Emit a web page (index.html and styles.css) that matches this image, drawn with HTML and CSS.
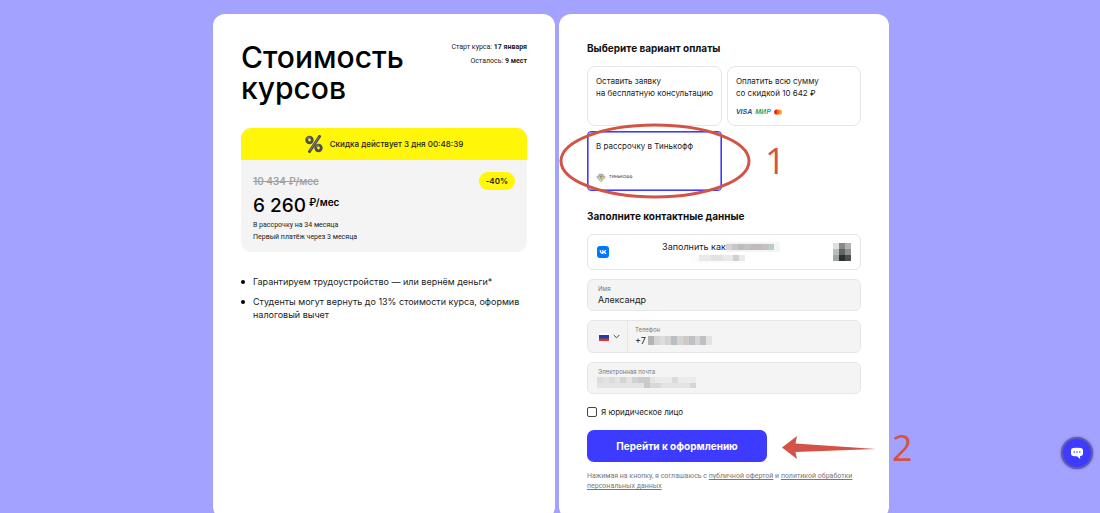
FILE: index.html
```html
<!DOCTYPE html>
<html lang="ru">
<head>
  <meta charset="UTF-8" />
  <meta name="viewport" content="width=device-width, initial-scale=1.0"/>
  <title>Стоимость курсов</title>
  <link rel="stylesheet" href="styles.css">
</head>
<body>
  <main class="page">
    <section class="card price-card">
      <header class="price-head">
        <h1>Стоимость курсов</h1>
        <div class="start-info">
          <p>Старт курса: <strong>17 января</strong></p>
          <p>Осталось: <strong>9 мест</strong></p>
        </div>
      </header>

      <div class="offer">
        <div class="offer-timer">
          <svg class="percent" viewBox="0 0 18 18" aria-hidden="true">
            <path d="M14.5 1.5 4.5 16.5" stroke="#4a4a4c" stroke-width="3" stroke-linecap="round"/>
            <path d="M14.2 1.8 4.6 16" stroke="#85858a" stroke-width="1"/>
            <circle cx="4.5" cy="5" r="2.8" fill="none" stroke="#4f4f4c" stroke-width="2.800"/>
            <circle cx="13.5" cy="13" r="2.8" fill="none" stroke="#4f4f4c" stroke-width="2.800"/>
            <path d="M2 4a3 3 0 0 1 3-2M11 12a3 3 0 0 1 3-2" fill="none" stroke="#8b8b90" stroke-width="1"/>
          </svg>
          <span>Скидка действует 3 дня 00:48:39</span>
        </div>
        <div class="offer-body">
          <div class="old-row">
            <s class="old-price">10 434 ₽/мес</s>
            <span class="discount">-40%</span>
          </div>
          <p class="new-price">6 260<span class="unit">₽/мес</span></p>
          <p class="note">В рассрочку на 34 месяца</p>
          <p class="note">Первый платёж через 3 месяца</p>
        </div>
      </div>

      <ul class="benefits">
        <li>Гарантируем трудоустройство — или вернём деньги*</li>
        <li>Студенты могут вернуть до 13% стоимости курса, оформив налоговый вычет</li>
      </ul>
    </section>

    <form class="card pay-card">
      <h2>Выберите вариант оплаты</h2>
      <div class="options">
        <label class="option">
          <input type="radio" name="payment" value="request">
          <span>Оставить заявку<br>на бесплатную консультацию</span>
        </label>
        <label class="option">
          <input type="radio" name="payment" value="full">
          <span>Оплатить всю сумму<br>со скидкой 10 642 ₽</span>
          <span class="logos">
            <span class="visa">VISA</span>
            <span class="mir">МИ<span class="mir-end">Р</span></span>
            <svg class="mastercard" viewBox="0 0 8 6" aria-hidden="true">
              <circle cx="2.7" cy="3" r="2.6" fill="#eb1c26"/>
              <circle cx="5.3" cy="3" r="2.6" fill="#f79e1b"/>
              <path d="M4 .8a2.6 2.6 0 0 1 0 4.4 2.6 2.6 0 0 1 0-4.4z" fill="#ff5f00"/>
            </svg>
          </span>
        </label>
        <label class="option">
          <input type="radio" name="payment" value="tinkoff" checked>
          <span>В рассрочку в Тинькофф</span>
          <span class="logos">
            <svg class="tinkoff" viewBox="0 0 10 9" aria-hidden="true">
              <path d="M.3 3.2 2.4 2.6 2.2 6 .9 5.2zM9.7 3.2 7.6 2.6 7.8 6 9.1 5.2z" fill="#b9b9ba"/>
              <path d="M2.6 1.8h4.8v4Q7 7.6 5 8.6 3 7.6 2.6 5.8z" fill="#d8d3bd" stroke="#8e8e90" stroke-width=".6"/>
              <path d="M3.3.4 5 1.1 6.7.4v1.2H3.3z" fill="#8e8e90"/>
              <path d="M5 2.4v5.2l1.6-1.9V2.4z" fill="#e6cf62"/>
              <path d="M3.4 3.2h3.2M5 3.2v3" stroke="#69696c" stroke-width=".7"/>
            </svg>
            <span class="tinkoff-name">ТИНЬКОФФ</span>
          </span>
        </label>
        <svg class="mark-oval" viewBox="0 0 192 76" aria-hidden="true">
          <ellipse cx="96" cy="38" rx="94" ry="36" fill="none" stroke="#d35446" stroke-width="3"/>
        </svg>
        <span class="mark mark-one">1</span>
      </div>

      <h2>Заполните контактные данные</h2>
      <div class="fields">
        <button type="button" class="vk-fill">
          <svg class="vk" viewBox="0 0 12 12" aria-hidden="true">
            <rect width="12" height="12" rx="3" fill="#0077ff"/>
            <path d="M2.2 4h1.2c.1 1.6.8 2.4 1.4 2.6V4h1.2v1.5C6.7 5.4 7.4 4.7 7.7 4h1.2C8.7 4.9 8 5.6 7.5 5.9c.5.3 1.3.9 1.6 2.1H7.8C7.5 7.3 6.900 6.800 6 6.700V8H5.800C3.500 8 2.300 6.600 2.200 4z" transform="translate(.4)" fill="#fff"/>
          </svg>
          <span class="vk-text">
            <span class="vk-line">Заполнить как
              <svg class="mosaic" width="54" height="10" viewBox="0 0 54 10" shape-rendering="crispEdges" aria-hidden="true">
                <path d="M0 0h54v10H0z" fill="#f4f4f4"/>
                <path d="M0 2h6v6H0z" fill="#d4d4d4"/><path d="M6 2h6v6H6z" fill="#c6c6c6"/>
                <path d="M12 2h6v6h-6z" fill="#bcbcbc"/><path d="M18 2h6v6h-6z" fill="#c5c3c2"/>
                <path d="M24 2h12v6H24z" fill="#c0bcbb"/><path d="M36 2h6v6h-6z" fill="#c5c1bf"/>
                <path d="M42 2h6v6h-6z" fill="#becaca"/>
              </svg>
            </span>
            <svg class="mosaic" width="60" height="10" viewBox="0 0 60 10" shape-rendering="crispEdges" aria-hidden="true">
              <path d="M0 1h54v9H0z" fill="#fbfbfb"/>
              <path d="M8 2h12v6H8z" fill="#e9e9e9"/><path d="M20 2h12v6H20z" fill="#e2e2e2"/>
              <path d="M32 2h10v6H32z" fill="#e9e9e9"/><path d="M42 2h6v6h-6z" fill="#d4cecf"/>
              <path d="M48 2h6v6h-6z" fill="#eaeaea"/>
            </svg>
          </span>
          <svg class="avatar" viewBox="0 0 18 18" shape-rendering="crispEdges" aria-hidden="true">
            <path d="M0 0h6v6H0z" fill="#dfe1e1"/><path d="M6 0h6v6H6z" fill="#858a89"/><path d="M12 0h6v6h-6z" fill="#aeb2b1"/>
            <path d="M0 6h6v6H0z" fill="#b9bcbc"/><path d="M6 6h6v6H6z" fill="#606463"/><path d="M12 6h6v6h-6z" fill="#8d9190"/>
            <path d="M0 12h6v6H0z" fill="#a2a5a5"/><path d="M6 12h6v6H6z" fill="#2c302f"/><path d="M12 12h6v6h-6z" fill="#4b4f4e"/>
          </svg>
        </button>

        <div class="field">
          <label for="name">Имя</label>
          <input type="text" id="name" value="Александр">
        </div>

        <div class="phone-row">
          <div class="country">
            <svg class="flag" viewBox="0 0 10 8" aria-hidden="true">
              <path d="M0 0h10v3H0z" fill="#fff"/>
              <path d="M0 2h10v4H0z" fill="#1c3fae"/>
              <path d="M0 5.5h10V8H0z" fill="#d8362f"/>
            </svg>
            <svg class="chevron" viewBox="0 0 7 5" aria-hidden="true">
              <path d="M.7 1 3.5 3.8 6.3 1" fill="none" stroke="#444" stroke-width="1"/>
            </svg>
            <select aria-label="Код страны">
              <option value="ru"></option>
            </select>
          </div>
          <div class="field">
            <label for="phone">Телефон</label>
            <input type="tel" id="phone" value="+7">
            <svg class="mosaic mosaic-phone" viewBox="0 0 64 9" shape-rendering="crispEdges" aria-hidden="true">
              <path d="M0 0h64v9H0z" fill="#d4d4d5"/>
              <path d="M0 0h6v9H0z" fill="#b3b3b4"/><path d="M12 0h5v9h-5z" fill="#dddddd"/>
              <path d="M23 0h6v9h-6z" fill="#bcbcc3"/><path d="M35 0h6v9h-6z" fill="#cfcac7"/>
              <path d="M41 0h6v9h-6z" fill="#bdc0c7"/><path d="M52 0h6v9h-6z" fill="#bfbfc0"/>
              <path d="M58 0h6v9h-6z" fill="#e3e3e3"/>
            </svg>
          </div>
        </div>

        <div class="field">
          <label for="email">Электронная почта</label>
          <input type="email" id="email">
          <svg class="mosaic mosaic-email" viewBox="0 0 99 11" shape-rendering="crispEdges" aria-hidden="true">
            <path d="M0 0h99v11H0z" fill="#e3e3e3"/>
            <path d="M0 0h6v6H0z" fill="#dcdcdc"/><path d="M12 0h6v6h-6z" fill="#dcdcdc"/>
            <path d="M23 0h6v6h-6z" fill="#d4d4d3"/><path d="M35 0h6v6h-6z" fill="#d1d1d1"/>
            <path d="M41 0h12v6H41z" fill="#cbcbcb"/><path d="M58 0h17v6H58z" fill="#ebebeb"/>
            <path d="M75 0h6v6h-6z" fill="#dadadc"/><path d="M81 0h18v6H81z" fill="#ebebeb"/>
            <path d="M47 6h6v5h-6z" fill="#c9c9c9"/><path d="M53 6h11v5H53z" fill="#d8d8d8"/>
            <path d="M93 6h6v5h-6z" fill="#d6d6d6"/>
          </svg>
        </div>
      </div>

      <label class="legal-entity">
        <input type="checkbox" name="legal">
        <span>Я юридическое лицо</span>
      </label>

      <div class="submit-row">
        <button type="submit" class="submit">Перейти к оформлению</button>
        <svg class="mark-arrow" viewBox="0 0 94 24" aria-hidden="true">
          <path d="M0 11.5 15 0 13.5 7.5 94 13 13.5 16 15 23z" fill="#d35446"/>
        </svg>
        <span class="mark mark-two">2</span>
      </div>

      <p class="terms">Нажимая на кнопку, я соглашаюсь с <a href="#">публичной офертой</a> и <a href="#">политикой обработки персональных данных</a></p>
    </form>
  </main>

  <button type="button" class="chat" aria-label="Открыть чат">
    <svg viewBox="0 0 14 13" aria-hidden="true">
      <path d="M3 1Q7 .4 11 1q2 .3 2 2.3v3.4q0 1.9-2 2.2l-1 .1.2 3L7 9.3q-2.2 0-4-.3-2-.3-2-2.3V3.3Q1 1.3 3 1z" fill="#fff"/>
      <circle cx="4.2" cy="5" r=".8" fill="#3d3bff"/>
      <circle cx="7" cy="5" r=".8" fill="#3d3bff"/>
      <circle cx="9.8" cy="5" r=".8" fill="#3d3bff"/>
    </svg>
  </button>
</body>
</html>
```
FILE: styles.css
```css
:root {
  --color-page: #a3a2ff;
  --color-accent: #3d3bff;
  --color-yellow: #fff608;
  --color-grey: #f4f4f4;
  --color-line: #e6e6e6;
  --color-mark: #d35446;
}

* {
  box-sizing: border-box;
}

body {
  margin: 0;
  font-family: Inter, Roboto, sans-serif;
  font-size: 9px;
  line-height: 12px;
  background: var(--color-page);
  color: #222;
}

h1, h2, p, ul {
  margin: 0;
}

input, button, select {
  font: inherit;
  color: inherit;
}

.page {
  display: grid;
  grid-template-columns: 342fr 330fr;
  gap: 4px;
  max-width: 680px;
  margin: 0 auto;
  padding: 14px 1px 0 3px;
}

.card {
  background: #fff;
  border-radius: 12px;
  padding: 28px;
}

/* price */

.price-head {
  display: flex;
  justify-content: space-between;
  margin-bottom: 24px;
}

h1 {
  width: 170px;
  font-size: 30px;
  line-height: 31px;
  font-weight: 500;
  color: #000;
}

.start-info {
  font-family: Roboto, sans-serif;
  font-size: 7px;
  line-height: 14px;
  text-align: right;
  white-space: nowrap;
  margin-top: -2px;
}

.start-info strong {
  font-weight: 700;
}

.offer {
  border-radius: 10px;
  overflow: hidden;
  background: var(--color-grey);
}

.offer-timer {
  display: flex;
  align-items: center;
  justify-content: center;
  gap: 7px;
  height: 32px;
  background: var(--color-yellow);
  font-size: 8px;
  font-weight: 500;
}

.percent {
  width: 18px;
  height: 18px;
  fill: none;
}

.offer-body {
  padding: 12px 12px 9px;
}

.old-row {
  display: flex;
  align-items: center;
  justify-content: space-between;
}

.old-price {
  font-size: 10px;
  font-weight: 600;
  color: #a2a2a2;
}

.discount {
  padding: 3px 7px;
  border-radius: 9px;
  background: var(--color-yellow);
  font-size: 8px;
  font-weight: 600;
}

.new-price {
  display: flex;
  gap: 3px;
  margin: 4px 0 1px;
  font-size: 19px;
  line-height: 24px;
  font-weight: 500;
  color: #000;
}

.unit {
  font-size: 10px;
  line-height: 16px;
  font-weight: 600;
}

.note {
  font-family: Roboto, sans-serif;
  font-size: 7px;
}

.benefits {
  margin-top: 23px;
  padding: 0 0 0 12px;
  line-height: 13px;
  list-style: none;
}

.benefits li {
  position: relative;
  margin-bottom: 7px;
}

.benefits li::before {
  content: "";
  position: absolute;
  left: -12px;
  top: 5px;
  width: 4px;
  height: 4px;
  border-radius: 50%;
  background: #000;
}

/* payment */

h2 {
  font-size: 10px;
  line-height: 12px;
  font-weight: 700;
  color: #111;
  margin-bottom: 12px;
}

.options {
  position: relative;
  display: grid;
  grid-template-columns: 1fr 1fr;
  gap: 5px;
  margin-bottom: 19px;
}

.option {
  display: flex;
  flex-direction: column;
  justify-content: space-between;
  height: 60px;
  padding: 8px;
  border: 1px solid var(--color-line);
  border-radius: 8px;
  font-size: 8px;
  white-space: nowrap;
}

.option input {
  position: absolute;
  opacity: 0;
}

.option:has(input:checked) {
  border-color: var(--color-accent);
  border-radius: 4px;
  box-shadow: inset 0 0 0 1px #8b8aff;
}

.logos {
  display: flex;
  align-items: center;
  gap: 3px;
  height: 10px;
  line-height: 10px;
}

.visa, .mir {
  font-family: "Liberation Sans", sans-serif;
  font-size: 7px;
  font-weight: bold;
  font-style: italic;
  color: #1b4fa0;
}

.mir {
  color: #37a72e;
}

.mir-end {
  color: #17a3c4;
}

.mastercard {
  width: 8px;
  height: 6px;
}

.tinkoff {
  width: 10px;
  height: 9px;
}

.tinkoff-name {
  font-size: 4px;
  font-weight: 600;
  color: #666;
}

.fields {
  display: flex;
  flex-direction: column;
  gap: 9px;
}

.vk-fill {
  display: flex;
  align-items: center;
  justify-content: space-between;
  height: 36px;
  padding: 0 9px;
  background: #fff;
  border: 1px solid var(--color-line);
  border-radius: 6px;
  cursor: pointer;
}

.vk {
  width: 12px;
  height: 12px;
}

.vk-text {
  display: flex;
  flex-direction: column;
  align-items: center;
}

.vk-line {
  display: flex;
  align-items: center;
}

.avatar {
  width: 18px;
  height: 18px;
}

.field {
  position: relative;
  display: flex;
  flex-direction: column;
  flex: 1;
  height: 33px;
  padding: 4px 10px;
  background: var(--color-grey);
  border: 1px solid var(--color-line);
  border-radius: 6px;
}

.field label {
  font-size: 6px;
  line-height: 10px;
  color: #777;
}

.field input {
  width: 100%;
  height: 12px;
  padding: 0;
  border: none;
  outline: none;
  background: none;
}

.phone-row {
  display: flex;
  background: var(--color-grey);
  border: 1px solid var(--color-line);
  border-radius: 6px;
}

.phone-row .field {
  height: 31px;
  padding: 4px 7px;
  border: none;
}

.country {
  position: relative;
  display: flex;
  align-items: center;
  gap: 4px;
  width: 40px;
  padding-left: 11px;
  border-right: 1px solid var(--color-line);
}

.country select {
  position: absolute;
  inset: 0;
  opacity: 0;
}

.flag {
  width: 10px;
  height: 8px;
}

.chevron {
  width: 7px;
  height: 5px;
}

.mosaic-phone {
  position: absolute;
  left: 20px;
  top: 15px;
  width: 64px;
  height: 9px;
}

.mosaic-email {
  position: absolute;
  left: 9px;
  top: 14px;
  width: 99px;
  height: 11px;
}

.legal-entity {
  display: flex;
  align-items: center;
  gap: 4px;
  margin: 12px 0;
  font-size: 8px;
}

.legal-entity input {
  appearance: none;
  width: 10px;
  height: 10px;
  margin: 0;
  border: 1px solid #444;
  border-radius: 2px;
}

.submit-row {
  position: relative;
}

.submit {
  width: 180px;
  height: 32px;
  border: none;
  border-radius: 7px;
  background: var(--color-accent);
  color: #fff;
  font-size: 10px;
  font-weight: 700;
  cursor: pointer;
}

.terms {
  margin: 9px 0 0;
  font-family: Roboto, sans-serif;
  font-size: 7px;
  line-height: 10px;
  color: #777;
}

.terms a {
  color: inherit;
}

/* red hints over the form */

.mark {
  position: absolute;
  font-family: "Open Sans", sans-serif;
  font-size: 36px;
  line-height: 36px;
  color: var(--color-mark);
}

.mark-oval {
  position: absolute;
  left: -28px;
  top: 57px;
  width: 192px;
  height: 76px;
}

.mark-one {
  left: 178px;
  top: 77px;
}

.mark-arrow {
  position: absolute;
  left: 195px;
  top: 6px;
  width: 94px;
  height: 24px;
}

.mark-two {
  left: 305px;
  top: 0;
}

.chat {
  position: fixed;
  right: 7px;
  bottom: 44px;
  display: flex;
  align-items: center;
  justify-content: center;
  width: 32px;
  height: 32px;
  padding: 0;
  border: 2px solid #5c5bb0;
  border-radius: 50%;
  background: var(--color-accent);
  box-shadow: 0 0 3px #6665a5;
  cursor: pointer;
}

.chat svg {
  width: 14px;
  height: 13px;
}
```
